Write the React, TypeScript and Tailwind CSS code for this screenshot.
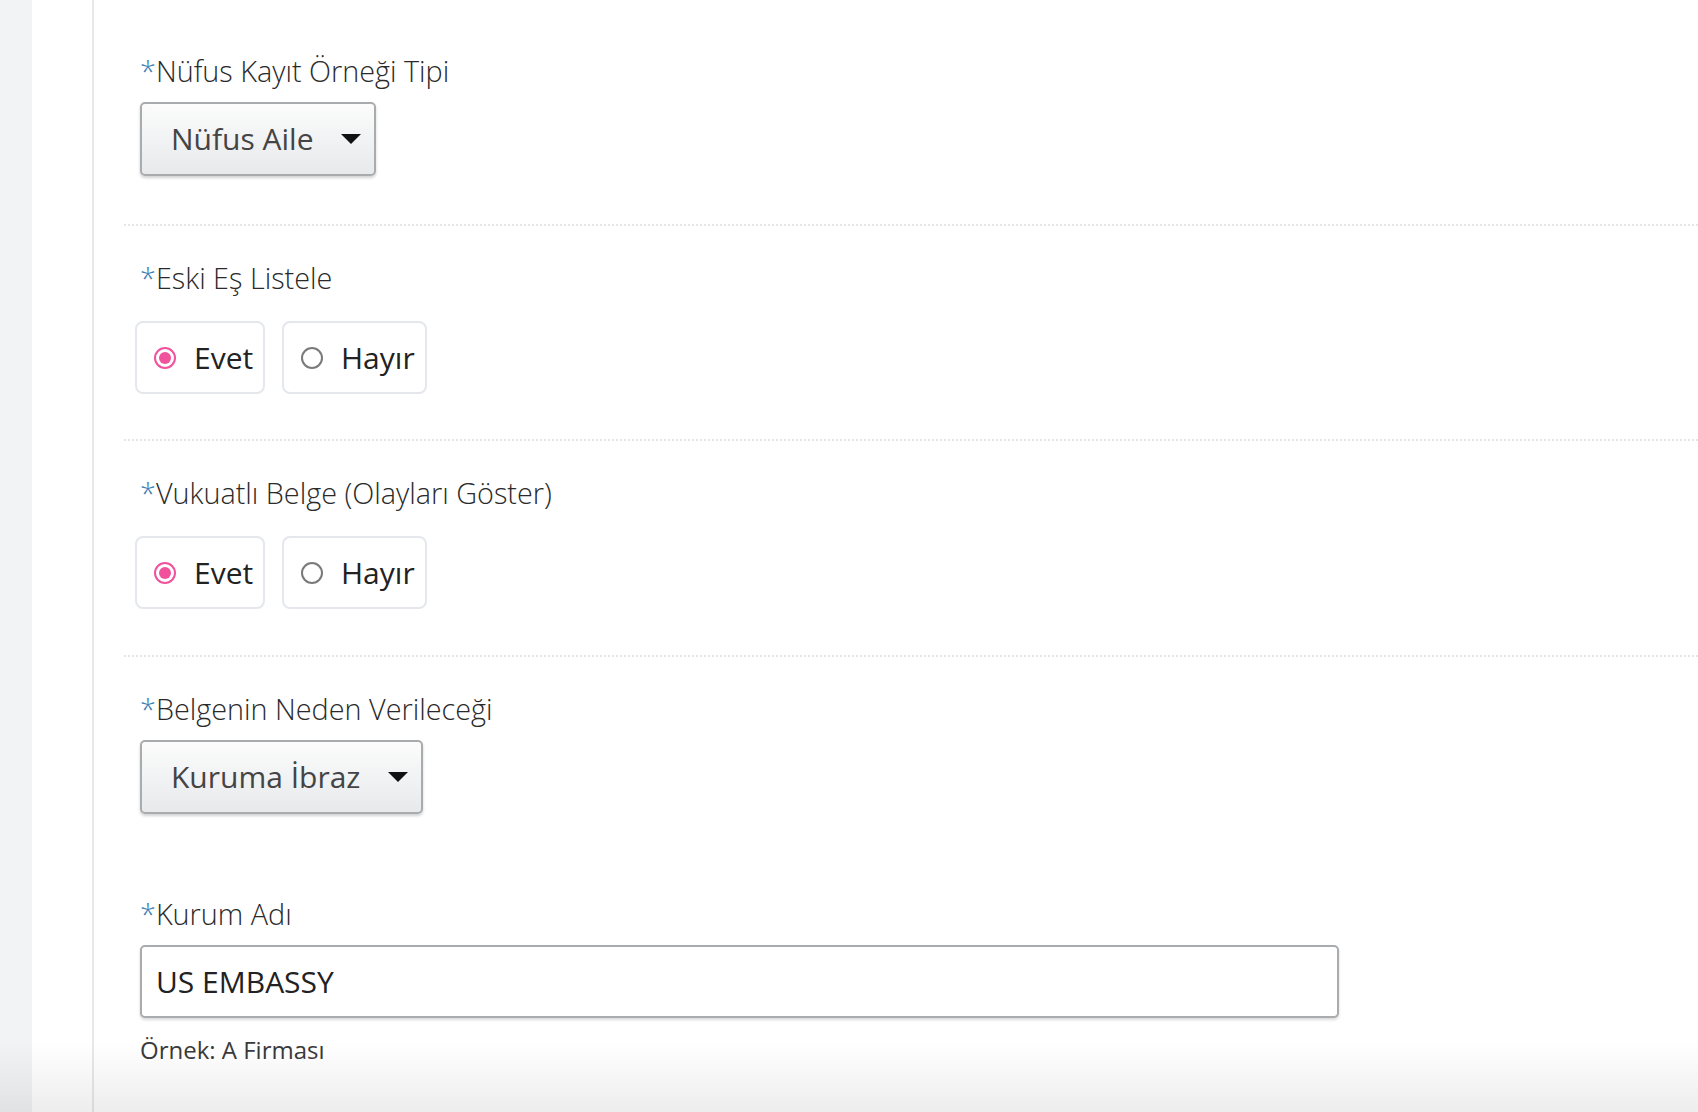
import React from "react";

function Label({ text }: { text: string }) {
  return (
    <div className="h-[38px] text-[28.8px] leading-[38px] font-light text-[#2a2a2a] whitespace-nowrap">
      <span className="text-[#3a80b3]">*</span>
      {text}
    </div>
  );
}

function Caret() {
  return (
    <svg width="20" height="10" viewBox="0 0 20 10" className="shrink-0">
      <polygon points="0,0 20,0 10,10" fill="#111" />
    </svg>
  );
}

function SelectBox({ value, gap }: { value: string; gap: string }) {
  return (
    <div
      className={`mt-[12px] inline-flex h-[74px] items-center rounded-[5px] border-2 border-[#a9acaf] bg-gradient-to-b from-[#fcfcfc] to-[#e7e9eb] pl-[29px] pr-[13px] shadow-[0_2px_3px_rgba(0,0,0,0.18)] ${gap}`}
    >
      <span className="text-[30px] leading-none text-[#444]">{value}</span>
      <Caret />
    </div>
  );
}

function Radio({ label, checked, w }: { label: string; checked: boolean; w: string }) {
  return (
    <div
      className={`flex h-[73px] items-center rounded-[8px] border-2 border-[#e4e7eb] bg-white pl-[17px] ${w}`}
    >
      {checked ? (
        <span className="flex h-[22px] w-[22px] shrink-0 items-center justify-center rounded-full border-2 border-[#f0529c]">
          <span className="h-[12px] w-[12px] rounded-full bg-[#f0529c]" />
        </span>
      ) : (
        <span className="h-[22px] w-[22px] shrink-0 rounded-full border-2 border-[#7a7a7a]" />
      )}
      <span className="ml-[18px] text-[30px] leading-none text-[#222]">{label}</span>
    </div>
  );
}

function RadioGroup() {
  return (
    <div className="ml-[-5px] mt-[24px] flex gap-[17px]">
      <Radio label="Evet" checked w="w-[130px]" />
      <Radio label="Hayır" checked={false} w="w-[145px]" />
    </div>
  );
}

export default function App() {
  return (
    <div className="relative flex h-[1112px] w-full overflow-hidden bg-white font-['Open_Sans',sans-serif]">
      <div className="w-[32px] shrink-0 bg-[#f2f3f5]" />
      <div className="w-[62px] shrink-0 border-r-2 border-[#e6e9ec]" />
      <div className="flex-1 pl-[30px]">
        <div className="border-b-2 border-dotted border-[#e3e6e9] pb-[48px] pl-[16px] pt-[52px]">
          <Label text="Nüfus Kayıt Örneği Tipi" />
          <SelectBox value="Nüfus Aile" gap="gap-[27px]" />
        </div>
        <div className="border-b-2 border-dotted border-[#e3e6e9] pb-[45px] pl-[16px] pt-[33px]">
          <Label text="Eski Eş Listele" />
          <RadioGroup />
        </div>
        <div className="border-b-2 border-dotted border-[#e3e6e9] pb-[46px] pl-[16px] pt-[33px]">
          <Label text="Vukuatlı Belge (Olayları Göster)" />
          <RadioGroup />
        </div>
        <div className="pl-[16px] pt-[33px]">
          <Label text="Belgenin Neden Verileceği" />
          <SelectBox value="Kuruma İbraz" gap="gap-[28px]" />
        </div>
        <div className="pl-[16px] pt-[81px]">
          <Label text="Kurum Adı" />
          <div className="mt-[12px] flex h-[73px] w-[1199px] items-center rounded-[5px] border-2 border-[#a9acaf] bg-white pl-[14px] shadow-[0_2px_3px_rgba(0,0,0,0.15)]">
            <span className="text-[30px] leading-none text-[#222]">US EMBASSY</span>
          </div>
          <div className="mt-[16px] text-[24px] leading-[32px] text-[#3a3a3a]">Örnek: A Firması</div>
        </div>
      </div>
      <div className="pointer-events-none absolute bottom-0 left-0 right-0 h-[70px] bg-gradient-to-b from-[rgba(0,0,0,0)] to-[rgba(0,0,0,0.07)]" />
    </div>
  );
}
